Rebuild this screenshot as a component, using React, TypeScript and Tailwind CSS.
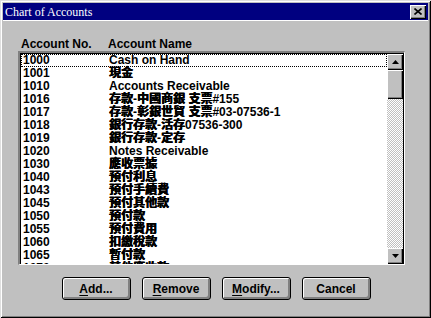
import React from "react";

type Account = { no: string; name: string };

const accounts: Account[] = [
  { no: "1000", name: "Cash on Hand" },
  { no: "1001", name: "現金" },
  { no: "1010", name: "Accounts Receivable" },
  { no: "1016", name: "存款-中國商銀 支票#155" },
  { no: "1017", name: "存款-彰銀世貿 支票#03-07536-1" },
  { no: "1018", name: "銀行存款-活存07536-300" },
  { no: "1019", name: "銀行存款-定存" },
  { no: "1020", name: "Notes Receivable" },
  { no: "1030", name: "應收票據" },
  { no: "1040", name: "預付利息" },
  { no: "1043", name: "預付手續費" },
  { no: "1045", name: "預付其他款" },
  { no: "1050", name: "預付款" },
  { no: "1055", name: "預付費用" },
  { no: "1060", name: "扣繳稅款" },
  { no: "1065", name: "暫付款" },
  { no: "1070", name: "其他應收款" },
];

const raised =
  "bg-[#c0c0c0] shadow-[inset_1px_1px_#fff,inset_-1px_-1px_#000,inset_-2px_-2px_#808080]";

const Arrow = ({ down }: { down?: boolean }) => (
  <svg width="7" height="4" viewBox="0 0 7 4">
    <polygon points={down ? "0,0 7,0 3.5,4" : "0,4 7,4 3.5,0"} fill="#000" />
  </svg>
);

const PushButton = ({ hot, rest }: { hot?: string; rest: string }) => (
  <button className="w-[69px] h-[23px] rounded-[3px] border border-black bg-[#c0c0c0] shadow-[inset_1px_1px_#fff,inset_-1px_-1px_#808080,inset_-2px_-2px_#808080] text-[12px] font-bold text-black leading-none">
    {hot && <span className="underline underline-offset-2">{hot}</span>}
    {rest}
  </button>
);

// the old bitmap CJK font is very heavy; split so only the CJK runs get thickened
const Name = ({ text }: { text: string }) => (
  <span>
    {text.split(/([^\x00-\x7f]+)/).map((part, i) =>
      /[^\x00-\x7f]/.test(part) ? (
        <span key={i} className="[text-shadow:0.6px_0_0_#000,0_0.3px_0_#000]">
          {part}
        </span>
      ) : (
        part
      )
    )}
  </span>
);

export default function App() {
  return (
    <div
      className="w-[431px] h-[318px] bg-[#c0c0c0] p-[3px] flex flex-col shadow-[inset_1px_1px_#dfdfdf,inset_-1px_-1px_#000,inset_2px_2px_#fff,inset_-2px_-2px_#808080]"
      style={{ fontFamily: '"Liberation Sans", "Noto Sans CJK TC", sans-serif' }}
    >
      {/* title bar */}
      <div className="h-[18px] border-b border-white bg-[#000080] flex items-center justify-between pl-[2px] pr-[2px]">
        <span className="text-white text-[12px] leading-none" style={{ fontFamily: '"Liberation Serif", serif' }}>
          Chart of Accounts
        </span>
        <div className={`w-[16px] h-[14px] flex items-center justify-center ${raised}`}>
          <svg width="8" height="7" viewBox="0 0 8 7">
            <path d="M0.5 0.5 L7.5 6.5 M7.5 0.5 L0.5 6.5" stroke="#000" strokeWidth="1.6" />
          </svg>
        </div>
      </div>

      <div className="flex flex-col pl-[15px] pr-[23px]">
        {/* column headers */}
        <div className="mt-[16px] grid grid-cols-[87px_1fr] pl-[3px] text-[12px] font-bold leading-[14px] text-black">
          <span>Account No.</span>
          <span>Account Name</span>
        </div>

        {/* list box */}
        <div className="h-[214px] border-t-2 border-l-2 border-t-[#808080] border-l-[#808080] border-b border-r border-b-white border-r-white">
          <div className="h-full flex border-t border-l border-black">
            <div className="flex-1 bg-white overflow-hidden">
              {accounts.map((a, i) => (
                <div
                  key={a.no}
                  className={`grid grid-cols-[88px_1fr] h-[13px] text-[12px] font-bold leading-[13px] text-black whitespace-nowrap ${
                    i === 0 ? "outline-1 outline-dotted outline-black -outline-offset-1" : ""
                  }`}
                >
                  <span className="pl-[2px]">{a.no}</span>
                  <Name text={a.name} />
                </div>
              ))}
            </div>

            {/* scrollbar */}
            <div className="w-[17px] flex flex-col border-r border-black">
              <div className={`h-[16px] flex items-center justify-center ${raised}`}>
                <Arrow />
              </div>
              <div className={`h-[29px] ${raised}`} />
              <div className="flex-1 bg-[repeating-conic-gradient(#c0c0c0_0_25%,#fff_0_50%)] bg-[length:2px_2px]" />
              <div className={`h-[16px] flex items-center justify-center ${raised}`}>
                <Arrow down />
              </div>
            </div>
          </div>
        </div>
      </div>

      {/* buttons */}
      <div className="mt-[12px] flex justify-center gap-[11px] pl-[1px]">
        <PushButton hot="A" rest="dd..." />
        <PushButton hot="R" rest="emove" />
        <PushButton hot="M" rest="odify..." />
        <PushButton rest="Cancel" />
      </div>
    </div>
  );
}
